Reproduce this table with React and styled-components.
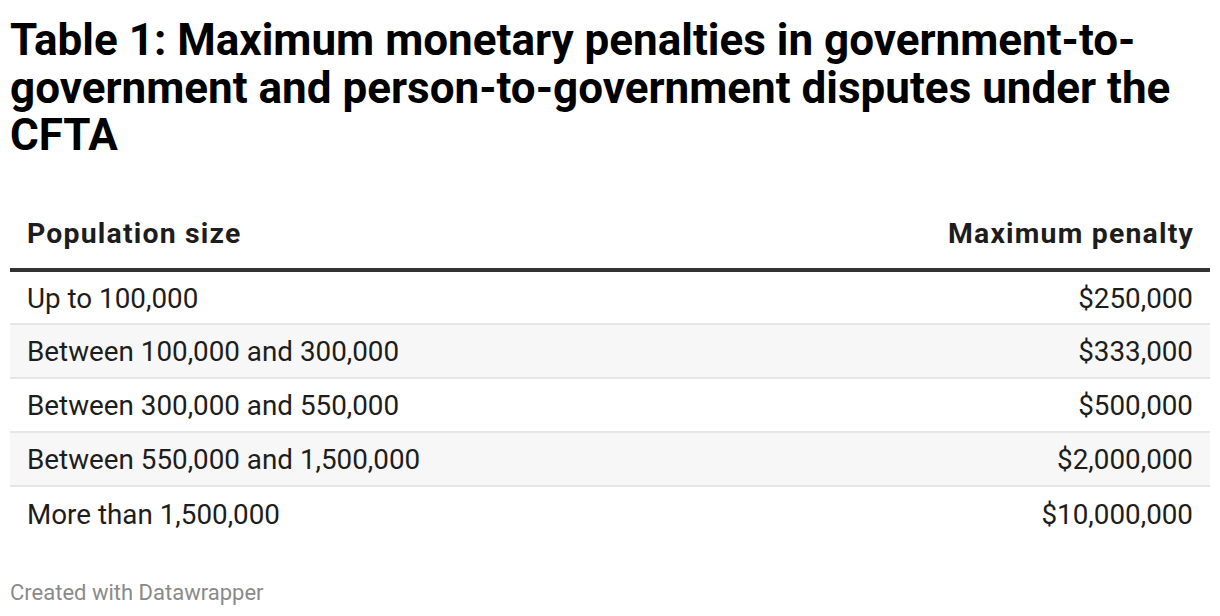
import React from 'react'
import styled, { createGlobalStyle } from 'styled-components'

const rows = [
    { size: 'Up to 100,000', penalty: '$250,000' },
    { size: 'Between 100,000 and 300,000', penalty: '$333,000' },
    { size: 'Between 300,000 and 550,000', penalty: '$500,000' },
    { size: 'Between 550,000 and 1,500,000', penalty: '$2,000,000' },
    { size: 'More than 1,500,000', penalty: '$10,000,000' },
]

function App() {
    return (
        <>
            <GlobalStyle />
            <Chart>
                <Title>
                    Table 1: Maximum monetary penalties in government-to-government and person-to-government disputes under the CFTA
                </Title>

                <Table>
                    <thead>
                        <HeadRow>
                            <HeadCell>Population size</HeadCell>
                            <HeadCell $right>Maximum penalty</HeadCell>
                        </HeadRow>
                    </thead>
                    <tbody>
                        {rows.map((row, i) => (
                            <Row key={row.size} $striped={i % 2 === 1} $last={i === rows.length - 1}>
                                <Cell>{row.size}</Cell>
                                <Cell $right>{row.penalty}</Cell>
                            </Row>
                        ))}
                    </tbody>
                </Table>

                <Footer>Created with Datawrapper</Footer>
            </Chart>
        </>
    )
}

export default App

const GlobalStyle = createGlobalStyle`
    body{
        margin:0;
        background:#fff;
        font-family: Roboto, "Noto Sans", sans-serif;
    }
`;

const Chart = styled.div`
    width:1200px;
    padding:17px 10px 0;
    display:flex;
    flex-direction:column;
`;

const Title = styled.h1`
    margin:0;
    font-size:44px;
    line-height:47.5px;
    font-weight:700;
    color:#000;
    max-width:1175px;
`;

const Table = styled.table`
    width:100%;
    margin-top:56px;
    border-collapse:collapse;
    font-size:27.8px;
    color:#1d1d1d;
`;

const HeadRow = styled.tr`
    border-bottom:4px solid #333;
`;

const HeadCell = styled.th`
    font-weight:700;
    font-size:28.4px;
    letter-spacing:1.2px;
    line-height:1.3;
    padding:0 16px 16px 17px;
    text-align:${p => p.$right ? 'right' : 'left'};
`;

const Row = styled.tr`
    height:54px;
    background:${p => p.$striped ? '#f7f7f7' : '#fff'};
    border-bottom:${p => p.$last ? 'none' : '2px solid #e6e6e6'};
`;

const Cell = styled.td`
    padding:1px 17px 0;
    line-height:1.2;
    vertical-align:middle;
    text-align:${p => p.$right ? 'right' : 'left'};
`;

const Footer = styled.div`
    margin-top:40px;
    font-size:22px;
    line-height:1.2;
    color:#8a8a8a;
`;
